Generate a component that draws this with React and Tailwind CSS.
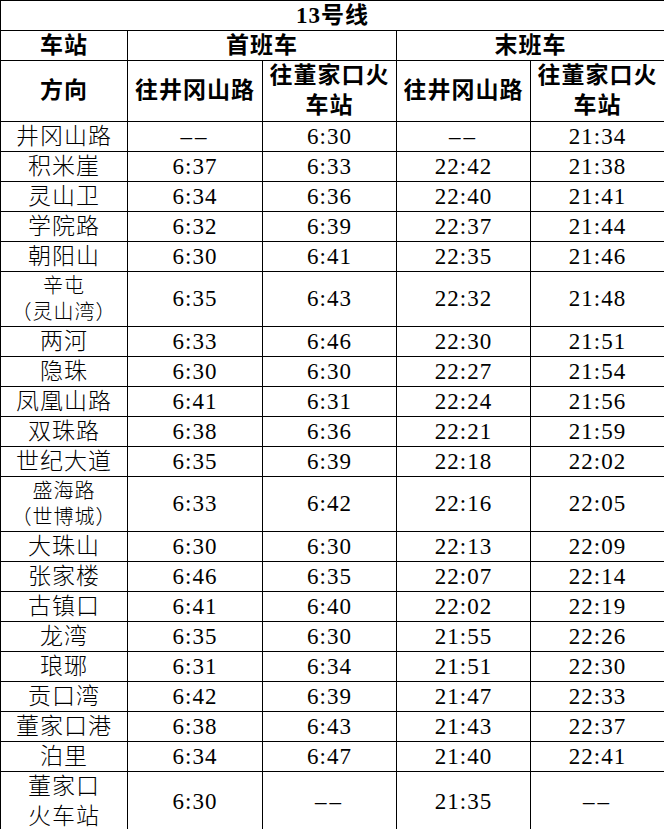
import React from 'react';

const rows = [
  { name: '井冈山路', times: ['--', '6:30', '--', '21:34'] },
  { name: '积米崖', times: ['6:37', '6:33', '22:42', '21:38'] },
  { name: '灵山卫', times: ['6:34', '6:36', '22:40', '21:41'] },
  { name: '学院路', times: ['6:32', '6:39', '22:37', '21:44'] },
  { name: '朝阳山', times: ['6:30', '6:41', '22:35', '21:46'] },
  { name: ['辛屯', '（灵山湾）'], small: true, times: ['6:35', '6:43', '22:32', '21:48'] },
  { name: '两河', times: ['6:33', '6:46', '22:30', '21:51'] },
  { name: '隐珠', times: ['6:30', '6:30', '22:27', '21:54'] },
  { name: '凤凰山路', times: ['6:41', '6:31', '22:24', '21:56'] },
  { name: '双珠路', times: ['6:38', '6:36', '22:21', '21:59'] },
  { name: '世纪大道', times: ['6:35', '6:39', '22:18', '22:02'] },
  { name: ['盛海路', '（世博城）'], small: true, times: ['6:33', '6:42', '22:16', '22:05'] },
  { name: '大珠山', times: ['6:30', '6:30', '22:13', '22:09'] },
  { name: '张家楼', times: ['6:46', '6:35', '22:07', '22:14'] },
  { name: '古镇口', times: ['6:41', '6:40', '22:02', '22:19'] },
  { name: '龙湾', times: ['6:35', '6:30', '21:55', '22:26'] },
  { name: '琅琊', times: ['6:31', '6:34', '21:51', '22:30'] },
  { name: '贡口湾', times: ['6:42', '6:39', '21:47', '22:33'] },
  { name: '董家口港', times: ['6:38', '6:43', '21:43', '22:37'] },
  { name: '泊里', times: ['6:34', '6:47', '21:40', '22:41'] },
  { name: ['董家口', '火车站'], tall: true, times: ['6:30', '--', '21:35', '--'] },
];

const cell = 'border border-black p-0 text-center align-middle';

const Time = ({ value }) =>
  value === '--' ? (
    <span className="tracking-[3px]">––</span>
  ) : (
    <span className="tracking-[1px]">{value}</span>
  );

export default function App() {
  return (
    <div className="w-[664px] bg-white text-black font-light font-['Liberation_Serif','Noto_Sans_CJK_SC',serif] text-[23px] leading-[24px]">
      <table className="w-full table-fixed border-collapse">
        <colgroup>
          <col className="w-[127px]" />
          <col className="w-[135px]" />
          <col className="w-[134px]" />
          <col className="w-[134px]" />
          <col className="w-[134px]" />
        </colgroup>
        <thead>
          <tr className="h-[30px] font-bold">
            <td colSpan={5} className={`${cell} tracking-[1px]`}>13号线</td>
          </tr>
          <tr className="h-[30px] font-bold">
            <td className={`${cell} tracking-[1px]`}>车站</td>
            <td colSpan={2} className={`${cell} tracking-[1px]`}>首班车</td>
            <td colSpan={2} className={`${cell} tracking-[1px]`}>末班车</td>
          </tr>
          <tr className="h-[60px] font-bold leading-[30px]">
            <td className={`${cell} tracking-[1px]`}>方向</td>
            <td className={`${cell} tracking-[1px]`}>往井冈山路</td>
            <td className={`${cell} tracking-[1px]`}>往董家口火<br />车站</td>
            <td className={`${cell} tracking-[1px]`}>往井冈山路</td>
            <td className={`${cell} tracking-[1px]`}>往董家口火<br />车站</td>
          </tr>
        </thead>
        <tbody>
          {rows.map((row, i) => (
            <tr
              key={i}
              className={row.small ? 'h-[55px]' : row.tall ? 'h-[59px]' : 'h-[30px]'}
            >
              <td className={`${cell} tracking-[1px]`}>
                {Array.isArray(row.name) ? (
                  <div className={row.small ? 'text-[20px] leading-[26px]' : 'leading-[30px]'}>
                    {row.name[0]}
                    <br />
                    {row.name[1]}
                  </div>
                ) : (
                  row.name
                )}
              </td>
              {row.times.map((t, j) => (
                <td key={j} className={cell}>
                  <Time value={t} />
                </td>
              ))}
            </tr>
          ))}
        </tbody>
      </table>
    </div>
  );
}
